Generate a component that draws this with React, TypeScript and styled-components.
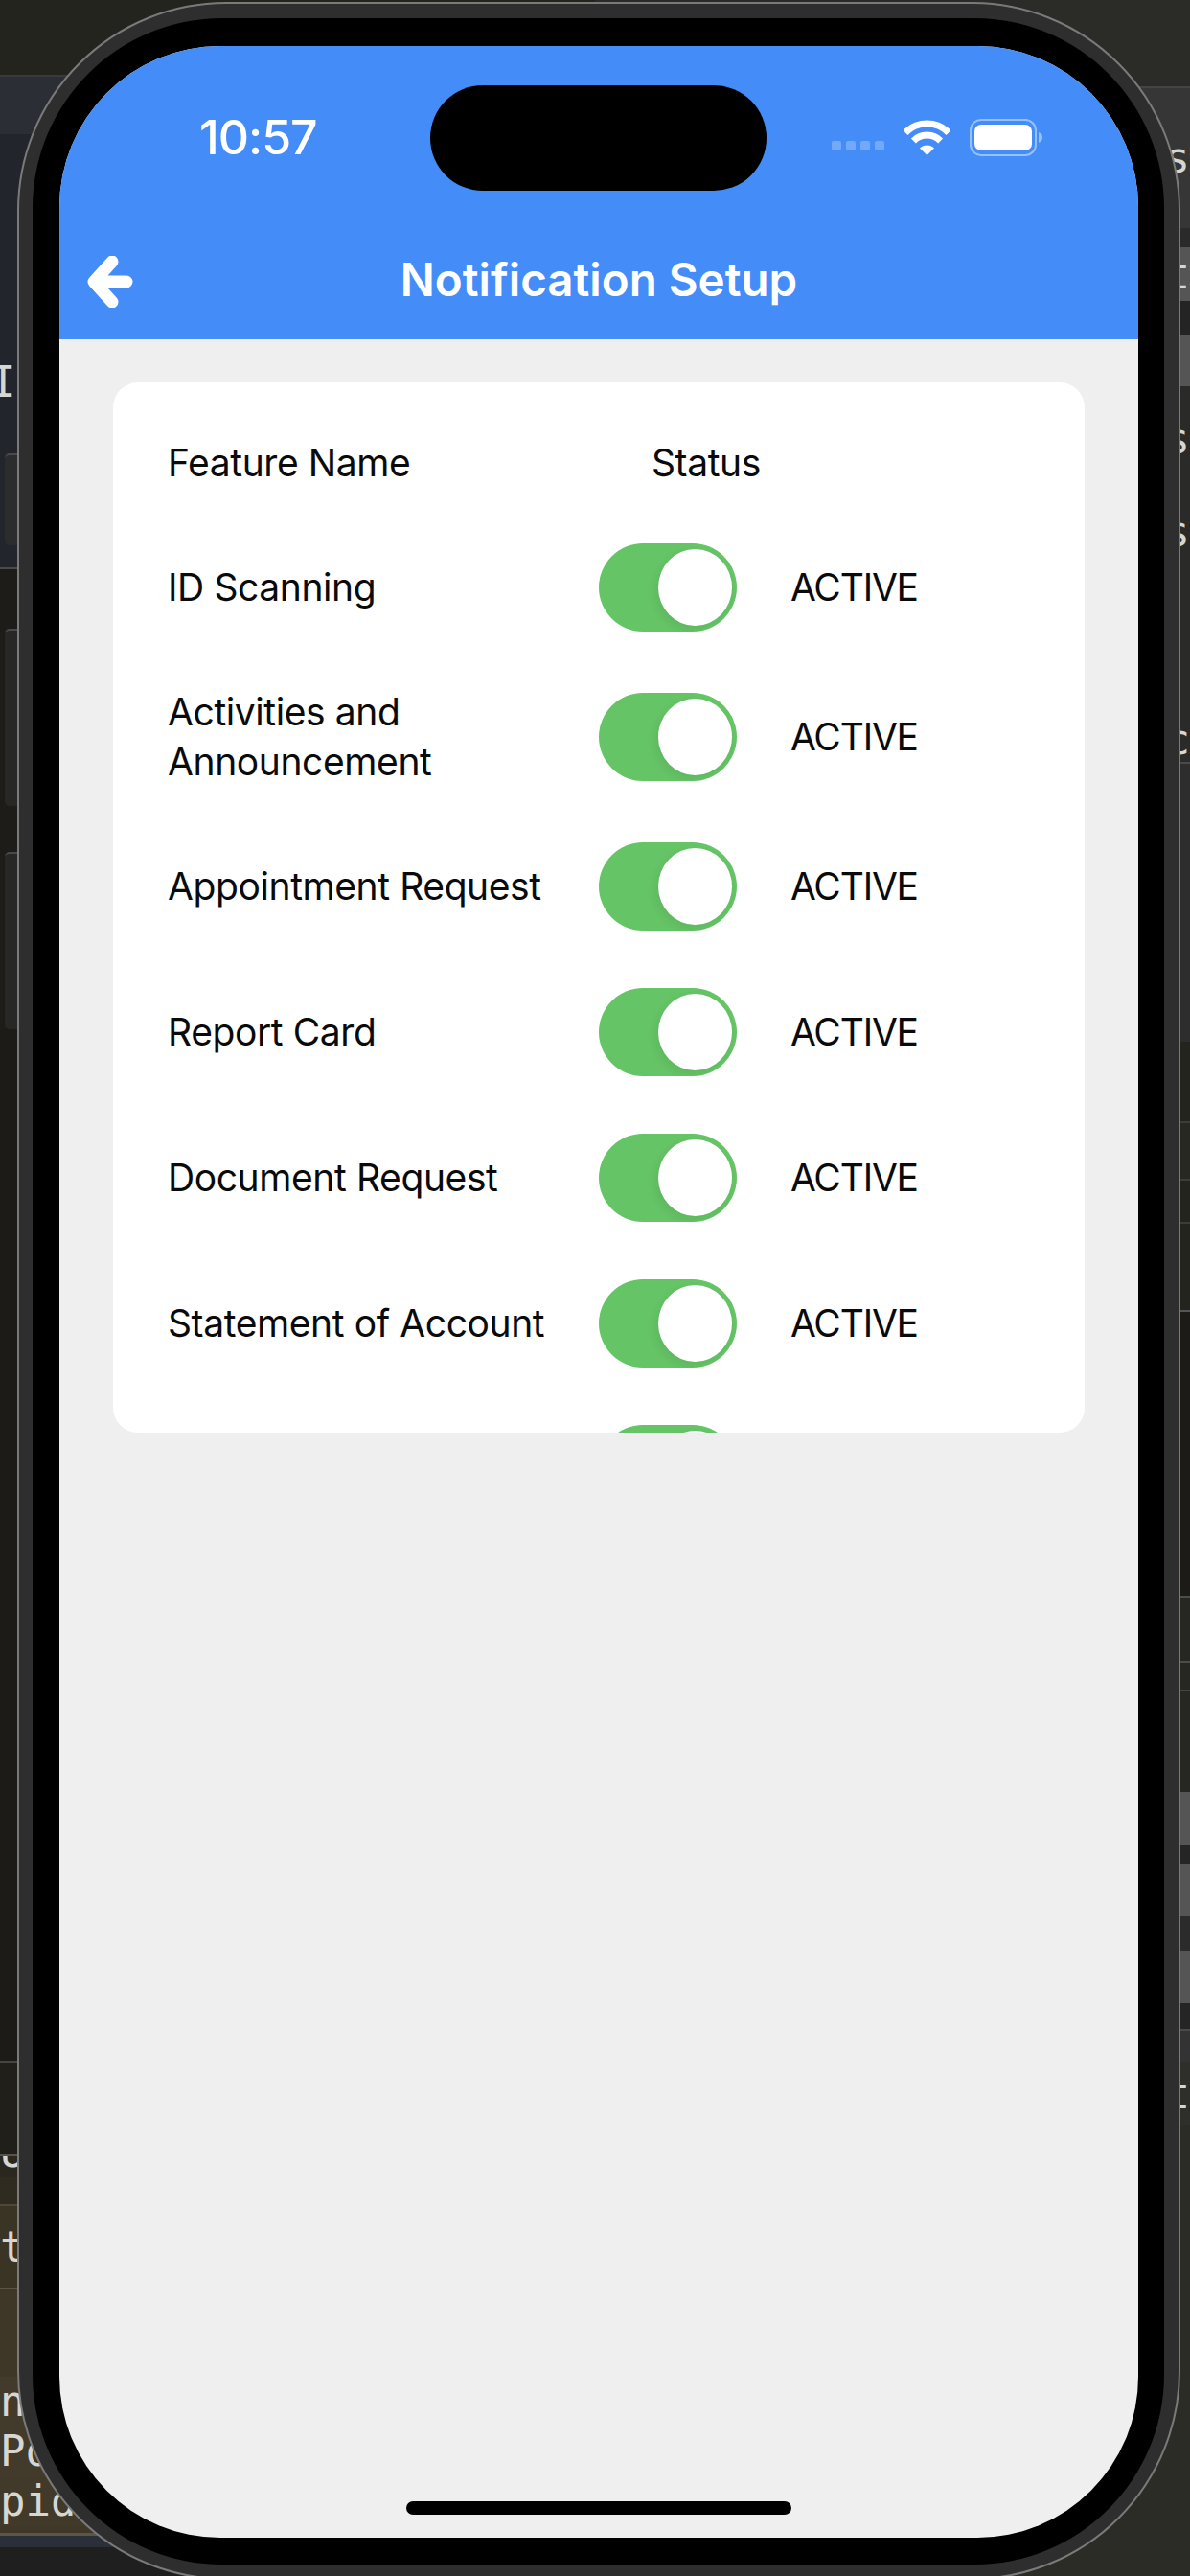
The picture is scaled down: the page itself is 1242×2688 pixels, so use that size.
import styled, { createGlobalStyle } from 'styled-components';

const COLORS = {
  BLUE: '#448cf8',
  GREEN: '#65c466',
  SCREEN: '#efefef',
  TEXT: '#0a0a0a',
};

type BandData = {
  h: number;
  bg: string;
  line?: string;
  text?: string;
  shift?: number;
  end?: boolean;
  button?: string;
};

const LEFT_BANDS: BandData[] = [
  { h: 78, bg: '#24241f' },
  { h: 62, bg: '#2c2e35', line: '#3a3a3c' },
  { h: 235, bg: '#23252c' },
  { h: 47, bg: '#23252c', text: 'I', shift: -10 },
  { h: 51, bg: '#23252c' },
  { h: 96, bg: '#23252c', button: '#2b2c2e' },
  { h: 23, bg: '#23252c' },
  { h: 64, bg: '#1d1c18', line: '#4a4a48' },
  { h: 185, bg: '#1d1c18', button: '#272725' },
  { h: 48, bg: '#1d1c18' },
  { h: 185, bg: '#1d1c18', button: '#272725' },
  { h: 1077, bg: '#1c1b18' },
  { h: 97, bg: '#201f1a', line: '#46453f' },
  { h: 24, bg: '#2a271f', line: '#55534c', text: 'U', end: true },
  { h: 28, bg: '#302b20' },
  { h: 87, bg: '#3a3425', line: '#4d4839', text: 't' },
  { h: 93, bg: '#3e3728', line: '#5a5546' },
  { h: 52, bg: '#423a2a', text: 'n' },
  { h: 52, bg: '#423a2a', text: 'Po' },
  { h: 52, bg: '#413a2a', text: 'pid' },
  { h: 7, bg: '#3f3828' },
  { h: 3, bg: '#5a5648' },
  { h: 12, bg: '#2a2f3a' },
  { h: 30, bg: '#1f1f1f' },
];

const RIGHT_BANDS: BandData[] = [
  { h: 90, bg: '#2b2b28' },
  { h: 52, bg: '#363636', line: '#444' },
  { h: 46, bg: '#363636', text: 'os' },
  { h: 50, bg: '#363636' },
  { h: 20, bg: '#2a2a2a' },
  { h: 56, bg: '#555555', text: 't' },
  { h: 36, bg: '#242424' },
  { h: 53, bg: '#555555' },
  { h: 31, bg: '#2a2a28' },
  { h: 47, bg: '#2a2a28', text: 's' },
  { h: 50, bg: '#2a2a28' },
  { h: 47, bg: '#2a2a28', text: 's' },
  { h: 170, bg: '#2a2a28' },
  { h: 47, bg: '#2a2a28', text: 'ic' },
  { h: 292, bg: '#2d2d2d', line: '#4a4a4a' },
  { h: 83, bg: '#24241f' },
  { h: 60, bg: '#282823', line: '#3c3c38' },
  { h: 45, bg: '#24241f', line: '#3c3c38' },
  { h: 92, bg: '#24241f', line: '#3c3c38' },
  { h: 298, bg: '#1c1b17', line: '#555' },
  { h: 68, bg: '#262622', line: '#4c4c48' },
  { h: 30, bg: '#262622', line: '#4c4c48' },
  { h: 107, bg: '#262622', line: '#45453f' },
  { h: 55, bg: '#555555' },
  { h: 20, bg: '#252525' },
  { h: 54, bg: '#555555' },
  { h: 37, bg: '#2b2b2b' },
  { h: 54, bg: '#555555' },
  { h: 27, bg: '#252525' },
  { h: 35, bg: '#333333', line: '#4a4a4a' },
  { h: 65, bg: '#2e2e2a', text: 't' },
  { h: 500, bg: '#2c2c27' },
];

const FEATURES = [
  'ID Scanning',
  'Activities and Announcement',
  'Appointment Request',
  'Report Card',
  'Document Request',
  'Statement of Account',
  '',
];

const GlobalStyle = createGlobalStyle`
  html, body {
    margin: 0;
    padding: 0;
    background: #1c1b18;
  }
  * {
    box-sizing: border-box;
  }
`;

const Desktop = styled.div`
  position: relative;
  width: 1242px;
  height: 2688px;
  overflow: hidden;
`;

const Backdrop = styled.div`
  display: grid;
  grid-template-columns: 1fr 1fr;
  height: 100%;
`;

const BandColumn = styled.div`
  display: flex;
  flex-direction: column;
  min-width: 0;
`;

const Band = styled.div<{ $bg: string; $line?: string; $end?: boolean; $right?: boolean }>`
  flex: none;
  display: flex;
  align-items: ${(p) => (p.$end ? 'flex-end' : 'center')};
  justify-content: ${(p) => (p.$right ? 'flex-end' : 'flex-start')};
  overflow: hidden;
  background: ${(p) => p.$bg};
  ${(p) => p.$line && `border-top: 2px solid ${p.$line};`}
  font-family: 'DejaVu Sans Mono', 'Liberation Mono', monospace;
  font-size: 44px;
  line-height: 52px;
  color: #d6d6d2;
`;

const BandButton = styled.div<{ $bg: string }>`
  width: 60px;
  height: 100%;
  margin-left: 5px;
  border-radius: 5px;
  border-top: 2px solid #4a4a4a;
  background: ${(p) => p.$bg};
`;

const Device = styled.div`
  position: absolute;
  top: 2px;
  left: 18px;
  width: 1214px;
  height: 2690px;
  padding: 15px 15px 15px 14px;
  border: 2px solid #7a7a7a;
  border-radius: 218px;
  background: #2e2e2e;
`;

const Bezel = styled.div`
  width: 1181px;
  height: 2657px;
  padding: 29px 27px 28px 28px;
  border-radius: 198px;
  background: #000;
`;

const Screen = styled.div`
  position: relative;
  display: flex;
  flex-direction: column;
  height: 100%;
  overflow: hidden;
  border-radius: 168px;
  background: ${COLORS.SCREEN};
  font-family: Inter, 'Liberation Sans', sans-serif;
`;

const Header = styled.header`
  flex: none;
  display: flex;
  flex-direction: column;
  height: 306px;
  background: ${COLORS.BLUE};
  color: #fff;
`;

const StatusBar = styled.div`
  flex: none;
  display: flex;
  align-items: center;
  justify-content: space-between;
  height: 190px;
  padding: 0 98px 0 146px;
`;

const Time = styled.span`
  font-size: 50px;
  font-weight: 500;
  line-height: 60px;
  letter-spacing: -1px;
`;

const StatusIcons = styled.div`
  display: flex;
  align-items: center;
  gap: 21px;
`;

const SignalDots = styled.div`
  display: flex;
  gap: 5px;
  margin-top: 18px;
`;

const SignalDot = styled.span`
  width: 10px;
  height: 10px;
  border-radius: 2px;
  background: rgba(255, 255, 255, 0.25);
`;

const Island = styled.div`
  position: absolute;
  top: 41px;
  left: 387px;
  width: 351px;
  height: 110px;
  border-radius: 55px;
  background: #000;
`;

const NavBar = styled.div`
  flex: 1;
  display: flex;
  align-items: center;
  padding: 0 29px 8px;
`;

const BackButton = styled.button`
  display: flex;
  width: 48px;
  margin-top: 4px;
  padding: 0;
  border: none;
  background: none;
`;

const Title = styled.h1`
  flex: 1;
  margin: 0;
  font-size: 47.5px;
  font-weight: 600;
  line-height: 56px;
  text-align: center;
`;

const NavSpacer = styled.div`
  width: 48px;
`;

const Body = styled.main`
  flex: 1;
  padding: 45px 56px 0;
`;

const Card = styled.section`
  height: 1096px;
  padding: 30px 0 0 57px;
  overflow: hidden;
  border-radius: 26px;
  background: #fff;
  color: ${COLORS.TEXT};
  font-size: 39px;
  letter-spacing: -0.4px;
  line-height: 52px;
`;

const HeadRow = styled.div`
  display: grid;
  grid-template-columns: 505px auto;
  align-items: center;
  height: 108px;
`;

const Row = styled.div`
  display: grid;
  grid-template-columns: 450px 144px auto;
  align-items: center;
  min-height: 152px;
`;

const Label = styled.span`
  padding: 28px 20px 28px 0;
`;

const Status = styled.span`
  margin-left: 56px;
  letter-spacing: -1.2px;
`;

const Track = styled.div`
  display: flex;
  align-items: center;
  justify-content: flex-end;
  width: 144px;
  height: 92px;
  padding-right: 5px;
  border-radius: 46px;
  background: ${COLORS.GREEN};
`;

const Thumb = styled.div`
  width: 77px;
  height: 80px;
  border-radius: 50%;
  background: #fff;
  box-shadow: -3px 4px 10px rgba(0, 0, 0, 0.07);
`;

const HomeBar = styled.div`
  position: absolute;
  left: 362px;
  bottom: 24px;
  width: 402px;
  height: 14px;
  border-radius: 7px;
  background: #000;
`;

function Bands({ items, right }: { items: BandData[]; right?: boolean }) {
  return (
    <BandColumn>
      {items.map((band, i) => (
        <Band key={i} $bg={band.bg} $line={band.line} $end={band.end} $right={right} style={{ height: band.h }}>
          {band.button && <BandButton $bg={band.button} />}
          {band.text && <span style={band.shift ? { marginLeft: band.shift } : undefined}>{band.text}</span>}
        </Band>
      ))}
    </BandColumn>
  );
}

function App() {
  return (
    <Desktop>
      <GlobalStyle />
      <Backdrop>
        <Bands items={LEFT_BANDS} />
        <Bands items={RIGHT_BANDS} right />
      </Backdrop>
      <Device>
        <Bezel>
          <Screen>
            <Header>
              <StatusBar>
                <Time>10:57</Time>
                <StatusIcons>
                  <SignalDots>
                    <SignalDot />
                    <SignalDot />
                    <SignalDot />
                    <SignalDot />
                  </SignalDots>
                  <svg width='47' height='37' viewBox='0 0 47 37' fill='none'>
                    <path d='M0.9 13.4A32 32 0 0 1 46.1 13.4' stroke='#fff' strokeWidth='7' />
                    <path d='M9.4 21.9A20 20 0 0 1 37.6 21.9' stroke='#fff' strokeWidth='7' />
                    <path d='M23.5 37L16 29.5A10.6 10.6 0 0 1 31 29.5Z' fill='#fff' />
                  </svg>
                  <svg width='78' height='39' viewBox='0 0 78 39' fill='none'>
                    <rect x='1' y='1' width='68' height='37' rx='11' stroke='#fff' strokeOpacity='0.45' strokeWidth='2' />
                    <rect x='5' y='6' width='60' height='27' rx='7' fill='#fff' />
                    <path d='M72 14C75 15 76 17 76 19.5C76 22 75 24 72 25Z' fill='#fff' fillOpacity='0.45' />
                  </svg>
                </StatusIcons>
              </StatusBar>
              <Island />
              <NavBar>
                <BackButton aria-label='Back'>
                  <svg width='48' height='54' viewBox='0 0 48 54' fill='none'>
                    <path
                      d='M41 27H8M26 6L7 27L26 48'
                      stroke='#fff'
                      strokeWidth='13'
                      strokeLinecap='round'
                      strokeLinejoin='round'
                    />
                  </svg>
                </BackButton>
                <Title>Notification Setup</Title>
                <NavSpacer />
              </NavBar>
            </Header>
            <Body>
              <Card>
                <HeadRow>
                  <span>Feature Name</span>
                  <span>Status</span>
                </HeadRow>
                {FEATURES.map((feature, i) => (
                  <Row key={i}>
                    <Label>{feature}</Label>
                    <Track>
                      <Thumb />
                    </Track>
                    <Status>ACTIVE</Status>
                  </Row>
                ))}
              </Card>
            </Body>
            <HomeBar />
          </Screen>
        </Bezel>
      </Device>
    </Desktop>
  );
}

export default App;
